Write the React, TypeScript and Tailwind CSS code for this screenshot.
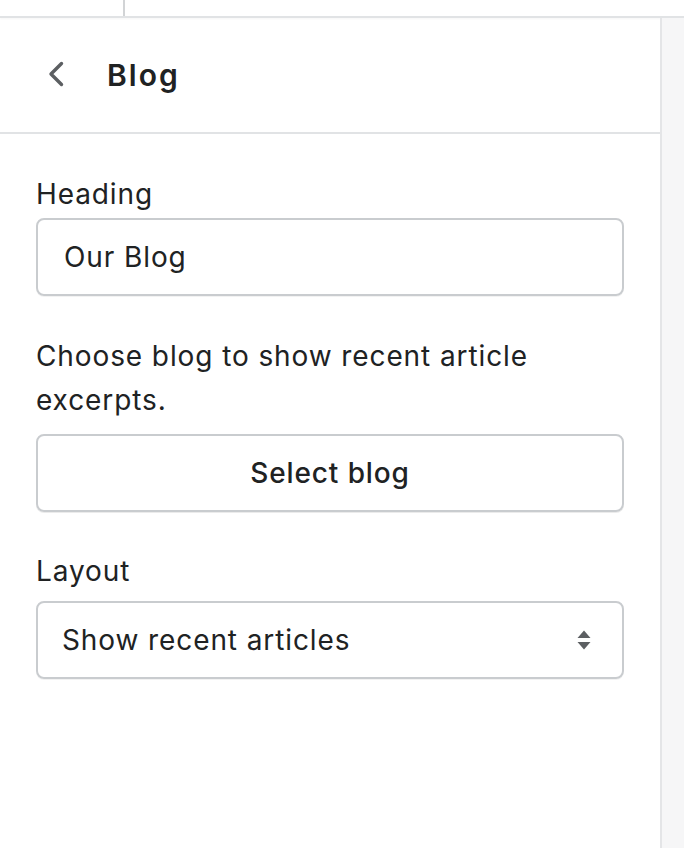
export default function App() {
  return (
    <div className="flex h-[848px] w-[684px] flex-col overflow-hidden bg-white font-['Inter',sans-serif] text-[#202223]">
      {/* top toolbar stub */}
      <div className="flex h-[18px] shrink-0 border-b-2 border-[#e1e3e5] shadow-[0_1px_2px_rgba(0,0,0,0.04)]">
        <div className="w-[125px] border-r-2 border-[#d2d4d6]" />
      </div>

      <div className="flex flex-1">
        <div className="flex w-[660px] flex-col">
          <div className="flex h-[116px] items-center border-b-2 border-[#e1e3e5] pl-[48px]">
            <svg width="16" height="26" viewBox="0 0 16 26" fill="none" className="mt-[-2px]">
              <polyline
                points="13.5,2.5 3,13 13.5,23.5"
                stroke="#5c5f62"
                strokeWidth="3.4"
                strokeLinecap="round"
                strokeLinejoin="round"
              />
            </svg>
            <h1 className="ml-[43px] text-[30px] font-semibold tracking-[2px]">Blog</h1>
          </div>

          <div className="flex flex-col px-[36px] pt-[42px] text-[28px] tracking-[0.9px]">
            <label className="leading-[36px]">Heading</label>
            <div className="mt-[6px] flex h-[78px] items-center rounded-[8px] border-2 border-[#c9cccf] pl-[26px] shadow-[0_1px_0_rgba(0,0,0,0.05)]">
              Our Blog
            </div>

            <p className="mt-[38px] leading-[44px]">
              Choose blog to show recent article excerpts.
            </p>
            <button className="mt-[12px] flex h-[78px] items-center justify-center rounded-[8px] border-2 border-[#c9cccf] font-medium shadow-[0_1px_0_rgba(0,0,0,0.08)]">
              Select blog
            </button>

            <label className="mt-[41px] leading-[36px]">Layout</label>
            <div className="mt-[12px] flex h-[78px] items-center justify-between rounded-[8px] border-2 border-[#c9cccf] pl-[24px] pr-[30px] shadow-[0_1px_0_rgba(0,0,0,0.05)]">
              <span>Show recent articles</span>
              <svg width="16" height="22" viewBox="0 0 16 22" fill="#5c5f62">
                <path d="M8 1.5 L14.5 9 H1.5 Z" />
                <path d="M8 20.5 L14.5 13 H1.5 Z" />
              </svg>
            </div>
          </div>
        </div>

        <div className="flex-1 border-l-2 border-[#e4e5e7] bg-[#f6f6f7]" />
      </div>
    </div>
  )
}
